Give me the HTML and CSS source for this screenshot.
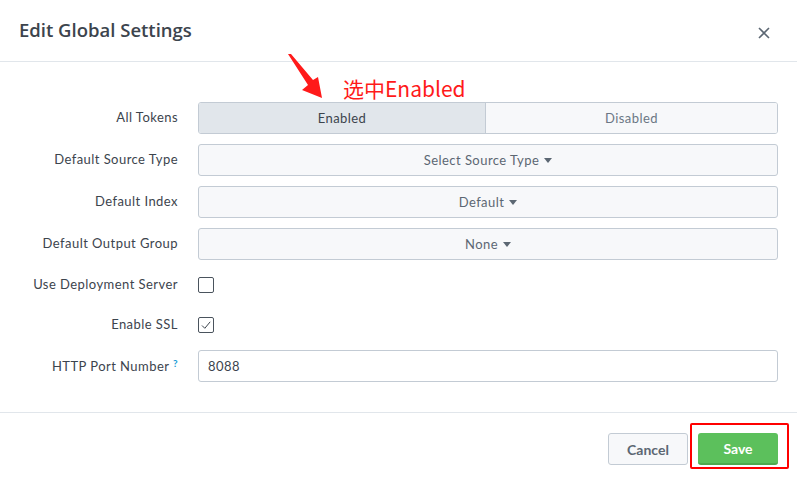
FILE: index.html
```html
<!DOCTYPE html>
<html lang="en">
<head>
    <meta charset="UTF-8">
    <meta name="viewport" content="width=device-width, initial-scale=1.0">
    <title>Edit Global Settings</title>
    <link rel="stylesheet" href="styles.css">
</head>
<body>
    <div class="modal">
        <header class="modal-header">
            <h1>Edit Global Settings</h1>
            <button class="close" aria-label="Close">
                <svg width="12" height="12" viewBox="0 0 12 12">
                    <path d="M1 1 L11 11 M11 1 L1 11" stroke="#5c6773" stroke-width="1.6" fill="none"/>
                </svg>
            </button>
        </header>

        <div class="modal-body">
            <div class="form-row">
                <label>All Tokens</label>
                <div class="segmented">
                    <button class="segment active">Enabled</button>
                    <button class="segment">Disabled</button>
                </div>
            </div>

            <div class="form-row">
                <label>Default Source Type</label>
                <button class="dropdown">Select Source Type <span class="caret"></span></button>
            </div>

            <div class="form-row">
                <label>Default Index</label>
                <button class="dropdown">Default <span class="caret"></span></button>
            </div>

            <div class="form-row">
                <label>Default Output Group</label>
                <button class="dropdown">None <span class="caret"></span></button>
            </div>

            <div class="form-row check-row">
                <label>Use Deployment Server</label>
                <span class="checkbox"></span>
            </div>

            <div class="form-row check-row">
                <label>Enable SSL</label>
                <span class="checkbox">
                    <svg width="12" height="12" viewBox="0 0 12 12">
                        <path d="M2 6.5 L4.8 9.3 L10.2 2.8" stroke="#3c444d" stroke-width="1" fill="none"/>
                    </svg>
                </span>
            </div>

            <div class="form-row">
                <label>HTTP Port Number <sup class="help">?</sup></label>
                <input type="text" class="text-input" value="8088">
            </div>
        </div>

        <footer class="modal-footer">
            <button class="btn">Cancel</button>
            <span class="highlight-wrap">
                <button class="btn btn-primary">Save</button>
                <span class="highlight"></span>
            </span>
        </footer>

        <!-- screenshot annotation -->
        <svg class="arrow" width="40" height="50" viewBox="286 52 40 50">
            <polygon points="288,54 291,54 313,80 318,77 322,98 302,90 308,85" fill="#ff1a1a"/>
        </svg>
        <div class="annotation">选中Enabled</div>
    </div>
</body>
</html>
```

FILE: styles.css
```css
:root {
    --text-color: #3c444d;
    --muted-color: #5c6773;
    --border-color: #c3cbd4;
    --divider-color: #e1e6eb;
    --field-background: #f7f8fa;
    --active-background: #e1e6eb;
    --save-color: #5cc05c;
}

* {
    margin: 0;
    padding: 0;
    box-sizing: border-box;
}

body {
    font-family: Lato, 'Open Sans', sans-serif;
    font-size: 13px;
    letter-spacing: 0.45px;
    color: var(--text-color);
    background-color: #ffffff;
}

.modal {
    position: relative;
    width: 797px;
    height: 484px;
    overflow: hidden;
}

.modal-header {
    height: 62px;
    display: flex;
    align-items: center;
    justify-content: space-between;
    padding: 0 26px 0 19px;
    border-bottom: 1px solid var(--divider-color);
}

h1 {
    font-family: 'Open Sans', Lato, sans-serif;
    font-size: 18.5px;
    font-weight: 600;
    letter-spacing: 0;
    color: var(--text-color);
    margin-top: -3px;
}

.close {
    background: none;
    border: none;
    width: 14px;
    height: 14px;
    display: flex;
    align-items: center;
    justify-content: center;
    margin-top: 4px;
}

.modal-body {
    display: flex;
    flex-direction: column;
    gap: 10px;
    padding: 40px 19px 30px 20px;
}

.form-row {
    display: grid;
    grid-template-columns: 158px 1fr;
    column-gap: 20px;
    align-items: center;
    height: 32px;
}

.check-row {
    height: 30px;
}

.form-row label {
    text-align: right;
    color: var(--text-color);
    white-space: nowrap;
    margin-top: -2px;
}

.help {
    color: #1a9cd6;
    font-size: 10px;
    font-weight: 700;
    vertical-align: 4px;
    margin-left: 0;
}

.segmented {
    display: flex;
    height: 32px;
    border: 1px solid var(--border-color);
    border-radius: 3px;
    overflow: hidden;
}

.segment {
    flex: 1;
    border: none;
    font: inherit;
    letter-spacing: inherit;
    color: #6b7785;
    background-color: var(--field-background);
}

.segment.active {
    flex: 0 0 287px;
    color: var(--text-color);
    background-color: var(--active-background);
    border-right: 1px solid var(--border-color);
}

.dropdown {
    height: 32px;
    border: 1px solid var(--border-color);
    border-radius: 3px;
    background-color: var(--field-background);
    font: inherit;
    letter-spacing: inherit;
    color: var(--muted-color);
    display: flex;
    align-items: center;
    justify-content: center;
    gap: 5px;
}

.caret {
    width: 0;
    height: 0;
    border-left: 4px solid transparent;
    border-right: 4px solid transparent;
    border-top: 5px solid var(--muted-color);
    margin-top: 1px;
}

.checkbox {
    width: 16px;
    height: 16px;
    border: 1px solid #4a535d;
    border-radius: 2px;
    display: flex;
    align-items: center;
    justify-content: center;
}

.text-input {
    height: 32px;
    border: 1px solid var(--border-color);
    border-radius: 3px;
    padding: 0 9px;
    font: inherit;
    letter-spacing: inherit;
    color: var(--text-color);
    background-color: #ffffff;
}

.modal-footer {
    display: flex;
    justify-content: flex-end;
    gap: 10px;
    padding: 20px 19px 0 0;
    border-top: 1px solid var(--divider-color);
}

.btn {
    width: 80px;
    height: 32px;
    border: 1px solid var(--border-color);
    border-radius: 3px;
    background-color: var(--field-background);
    font: inherit;
    font-size: 14px;
    font-weight: 700;
    letter-spacing: 0;
    color: var(--muted-color);
}

.btn-primary {
    border: none;
    border-bottom: 2px solid #4ea94e;
    background-color: var(--save-color);
    color: #ffffff;
}

.highlight-wrap {
    position: relative;
    display: flex;
}

.highlight {
    position: absolute;
    left: -8px;
    top: -10px;
    right: -11px;
    bottom: -4px;
    border: 2px solid #ff0000;
    border-radius: 2px;
}

.arrow {
    position: absolute;
    left: 286px;
    top: 52px;
}

.annotation {
    position: absolute;
    left: 343px;
    top: 75px;
    font-family: 'Noto Sans CJK SC', sans-serif;
    font-size: 21px;
    line-height: 26px;
    letter-spacing: 0;
    color: #ff1a1a;
}
```
